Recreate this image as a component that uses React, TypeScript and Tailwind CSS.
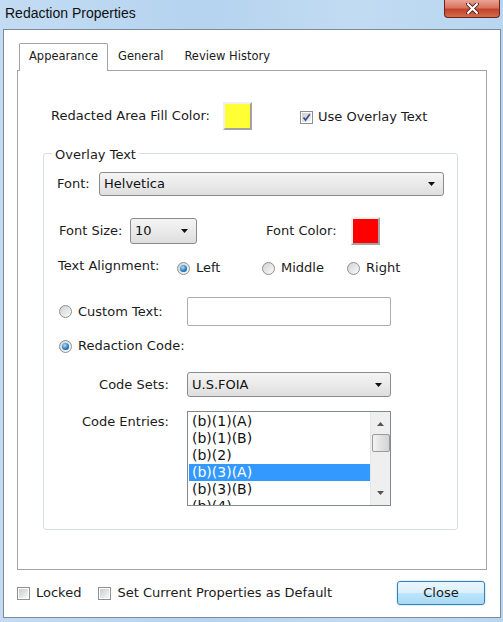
import React from 'react';

function Checkbox({ checked }: { checked?: boolean }) {
  return (
    <span className="relative flex w-[13px] h-[13px] shrink-0 border border-[#8e8f8f] bg-white p-px">
      <span className="flex-1 bg-gradient-to-br from-[#c9ccd1] to-[#f7f7f7]" />
      {checked && (
        <svg viewBox="0 0 11 11" className="absolute left-0 top-0 w-[11px] h-[11px]">
          <path d="M2.5 5.5 L4.5 8 L8.8 2.2" fill="none" stroke="#3a4f86" strokeWidth="1.7" />
        </svg>
      )}
    </span>
  );
}

function Radio({ checked }: { checked?: boolean }) {
  return (
    <span className="flex w-[13px] h-[13px] shrink-0 items-center justify-center rounded-full border border-[#8e8f8f] bg-gradient-to-br from-[#cfd1d4] to-[#fbfbfb]">
      {checked && (
        <span className="w-[7px] h-[7px] rounded-full bg-[radial-gradient(circle_at_40%_35%,#aee0fb,#2a7dc4_55%,#0c3a69)]" />
      )}
    </span>
  );
}

function Swatch({ color }: { color: 'yellow' | 'red' }) {
  return (
    <span
      className={
        'block w-[29px] h-[28px] shrink-0 border-2 border-t-[#f0f0f0] border-l-[#f0f0f0] border-r-[#a3a3a3] border-b-[#a3a3a3] ' +
        (color === 'yellow' ? 'bg-[#ffff33]' : 'bg-[#ff0000]')
      }
    />
  );
}

function Select({ value, className }: { value: string; className: string }) {
  return (
    <div
      className={
        'flex items-center justify-between rounded-[3px] border border-[#8a8b8c] bg-[linear-gradient(#f4f4f4,#eaeaea_50%,#dedede)] pl-[4px] pr-[8px] text-[#111] ' +
        className
      }
    >
      <span>{value}</span>
      <svg viewBox="0 0 7 4" className="w-[7px] h-[4px]">
        <path d="M0 0 H7 L3.5 4 Z" fill="#111" />
      </svg>
    </div>
  );
}

const codes = ['(b)(1)(A)', '(b)(1)(B)', '(b)(2)', '(b)(3)(A)', '(b)(3)(B)', '(b)(4)'];

export default function App() {
  return (
    <div className="w-[503px] h-[622px] overflow-hidden flex flex-col bg-[linear-gradient(90deg,#c3dcf3,#b5d3ef_40%,#c1dbf2_70%,#b9d6f1)] font-['DejaVu_Sans',sans-serif] text-[13px] text-[#1b1b1b]">
      {/* title bar */}
      <div className="h-[29px] flex items-start shrink-0">
        <span className="pl-[5px] pt-[3px] font-['Liberation_Sans',sans-serif] text-[14px] text-[#111]">
          Redaction Properties
        </span>
        <div className="ml-auto mr-[3px] w-[56px] h-[18px] flex items-center justify-center rounded-b-[4px] border border-t-0 border-[#6b2418] bg-[linear-gradient(#e9a395,#d9745f_45%,#c2432b_55%,#d46a4c)]">
          <svg viewBox="0 0 12 10" className="w-[13px] h-[11px] mb-px">
            <path d="M2 1 L10 9 M10 1 L2 9" stroke="#4a1b12" strokeWidth="3.6" strokeLinecap="square" />
            <path d="M2 1 L10 9 M10 1 L2 9" stroke="#fff" strokeWidth="2" strokeLinecap="square" />
          </svg>
        </div>
      </div>

      {/* client area */}
      <div className="ml-[3px] mr-[2px] h-[589px] shrink-0 border border-[#7d8b98] bg-white flex flex-col pt-[13px] px-[13px]">
        {/* tabs */}
        <div className="flex items-end h-[27px] pl-[2px] text-[11.5px]">
          <div className="relative z-10 -mb-px h-[28px] px-[9px] pt-[4px] border border-b-0 border-[#a3a3a3] rounded-t-[2px] bg-white">
            Appearance
          </div>
          <div className="h-[27px] px-[10px] pt-[5px]">General</div>
          <div className="h-[27px] px-[11px] pt-[5px]">Review History</div>
        </div>

        {/* tab panel */}
        <div className="h-[500px] border border-[#a3a3a3] flex flex-col">
          <div className="mt-[31px] pl-[33px] flex items-center h-[28px]">
            <span className="w-[172px]">Redacted Area Fill Color:</span>
            <Swatch color="yellow" />
            <span className="ml-[48px] flex items-center gap-[5px] mt-[2px]">
              <Checkbox checked />
              Use Overlay Text
            </span>
          </div>

          {/* group box */}
          <div className="relative mt-[23px] ml-[25px] mr-[28px] h-[377px] rounded-[3px] border border-[#d5dfe5] flex flex-col">
            <span className="absolute -top-[9px] left-[8px] bg-white px-[3px]">Overlay Text</span>

            <div className="mt-[18px] pl-[13px] flex items-center h-[24px]">
              <span className="w-[42px]">Font:</span>
              <Select value="Helvetica" className="w-[345px] h-[24px]" />
            </div>

            <div className="mt-[21px] pl-[15px] flex items-center h-[28px]">
              <span className="w-[71px]">Font Size:</span>
              <Select value="10" className="w-[67px] h-[26px]" />
              <span className="ml-[69px] w-[85px]">Font Color:</span>
              <Swatch color="red" />
            </div>

            <div className="mt-[14px] pl-[14px] flex items-center h-[16px]">
              <span className="w-[119px] -mt-[2px]">Text Alignment:</span>
              <span className="w-[85px] flex items-center gap-[6px] mt-[2px]">
                <Radio checked />
                Left
              </span>
              <span className="w-[85px] flex items-center gap-[6px] mt-[2px]">
                <Radio />
                Middle
              </span>
              <span className="flex items-center gap-[6px] mt-[2px]">
                <Radio />
                Right
              </span>
            </div>

            <div className="mt-[22px] pl-[15px] flex items-center h-[29px]">
              <span className="w-[128px] flex items-center gap-[6px]">
                <Radio />
                Custom Text:
              </span>
              <div className="w-[204px] h-[29px] rounded-[2px] border border-[#abadb3] bg-white" />
            </div>

            <div className="mt-[12px] pl-[15px] flex items-center h-[16px]">
              <span className="flex items-center gap-[6px]">
                <Radio checked />
                Redaction Code:
              </span>
            </div>

            <div className="mt-[18px] flex items-center h-[25px]">
              <span className="w-[143px] pr-[18px] text-right">Code Sets:</span>
              <Select value="U.S.FOIA" className="w-[204px] h-[25px]" />
            </div>

            <div className="mt-[14px] flex items-start">
              <span className="w-[143px] pr-[18px] pt-[1px] text-right">Code Entries:</span>
              <div className="w-[204px] h-[95px] border border-[#828790] bg-white flex overflow-hidden">
                <div className="flex-1 pt-px pl-px overflow-hidden text-[14px] leading-[17px] text-[#111]">
                  {codes.map((c) => (
                    <div
                      key={c}
                      className={'h-[17px] pl-[3px] ' + (c === '(b)(3)(A)' ? 'bg-[#3399ff] text-white' : '')}
                    >
                      {c}
                    </div>
                  ))}
                </div>
                <div className="w-[20px] bg-[#efefef] border-l border-[#e6e6e6] flex flex-col items-center">
                  <svg viewBox="0 0 7 4" className="w-[7px] h-[4px] mt-[10px]">
                    <path d="M0 4 H7 L3.5 0 Z" fill="#555" />
                  </svg>
                  <div className="mt-[8px] w-[18px] h-[18px] rounded-[2px] border border-[#9a9a9a] bg-[linear-gradient(90deg,#f3f3f3,#e2e2e2_50%,#d4d4d4)]" />
                  <svg viewBox="0 0 7 4" className="w-[7px] h-[4px] mt-auto mb-[10px]">
                    <path d="M0 0 H7 L3.5 4 Z" fill="#555" />
                  </svg>
                </div>
              </div>
            </div>
          </div>
        </div>

        {/* bottom row */}
        <div className="mt-[11px] mr-[2px] h-[24px] flex items-center">
          <span className="flex items-center gap-[6px]">
            <Checkbox />
            Locked
          </span>
          <span className="ml-[17px] flex items-center gap-[6px]">
            <Checkbox />
            Set Current Properties as Default
          </span>
          <div className="ml-auto w-[88px] h-[24px] flex items-center justify-center rounded-[3px] border border-[#3c7fb1] bg-[linear-gradient(#eaf6fd,#d9f0fc_50%,#bee6fd_50%,#a7d9f5)] shadow-[0_0_2px_#8ccbef]">
            Close
          </div>
        </div>
      </div>
    </div>
  );
}
